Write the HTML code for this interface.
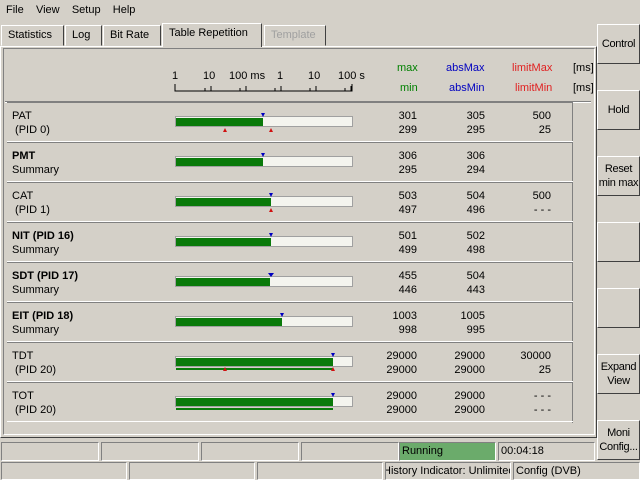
<!DOCTYPE html><html><head><style>
*{box-sizing:border-box}body{margin:0;width:640px;height:480px;background:#d4d0c8;font-family:"Liberation Sans",sans-serif;font-size:11px;position:relative;overflow:hidden;color:#000;white-space:nowrap}
.a{position:absolute}
.tab{position:absolute;top:25px;height:21px;border:1px solid;border-color:#fff #404040 #d4d0c8 #fff;padding:3px 6px;}
.btn{position:absolute;left:597px;width:43px;height:40px;border:1px solid;border-color:#fff #404040 #404040 #fff;text-align:center;font-size:11px;line-height:14px;display:flex;align-items:center;justify-content:center;letter-spacing:-0.3px}
.row{position:absolute;left:7px;width:566px;height:40px;border-bottom:1px solid #fff;border-top:1px solid #808080}
.nm{position:absolute;left:5px;top:6px;line-height:14px}
.bar{position:absolute;left:168px;top:13px;width:178px;height:11px;background:#f4f4ee;border:1px solid #a0a0a0}
.g{position:absolute;left:0;top:1px;height:8px;background:#0a7a0a}
.n{position:absolute;width:60px;text-align:right;top:6px;line-height:14px}
.tri{position:absolute;width:0;height:0;border-left:2px solid transparent;border-right:2px solid transparent}
.b{border-top:4px solid #0000c0}.rd{border-bottom:4px solid #d01010}
.sb{position:absolute;border:1px solid;border-color:#808080 #fff #fff #808080;height:19px;padding:2px 2px;overflow:hidden}
</style></head><body>
<div class="a" style="left:6px;top:4px">File&nbsp;&nbsp;&nbsp; View&nbsp;&nbsp;&nbsp; Setup&nbsp;&nbsp;&nbsp; Help</div>
<div class="a" style="left:0;top:46px;width:597px;height:392px;border:1px solid;border-color:#fff #404040 #404040 #fff"></div>
<div class="a" style="left:3px;top:48px;width:592px;height:387px;border:1px solid;border-color:#808080 #fff #fff #808080"></div>
<div class="tab" style="left:1px;width:63px">Statistics</div>
<div class="tab" style="left:65px;width:37px">Log</div>
<div class="tab" style="left:103px;width:58px">Bit Rate</div>
<div class="tab" style="left:162px;top:23px;height:24px;width:100px;border-bottom:none;background:#d4d0c8">Table Repetition</div>
<div class="tab" style="left:264px;width:62px;color:#a0a0a0">Template</div>
<div class="a" style="left:172px;top:70px">1</div>
<div class="a" style="left:203px;top:70px">10</div>
<div class="a" style="left:229px;top:70px">100 ms</div>
<div class="a" style="left:277px;top:70px">1</div>
<div class="a" style="left:308px;top:70px">10</div>
<div class="a" style="left:338px;top:70px">100 s</div>
<svg class="a" style="left:174px;top:84px" width="180" height="8"><path d="M1 0V7H178V0M31 4V7M37 2V7M66 4V7M72 2V7M101 4V7M107 2V7M136 4V7M142 2V7M171 4V7M177 2V7" stroke="#000" fill="none"/></svg>
<div class="a" style="left:397px;top:62px;color:#008000">max</div><div class="a" style="left:400px;top:82px;color:#008000">min</div>
<div class="a" style="left:446px;top:62px;color:#0000c0">absMax</div><div class="a" style="left:449px;top:82px;color:#0000c0">absMin</div>
<div class="a" style="left:512px;top:62px;color:#e02020">limitMax</div><div class="a" style="left:515px;top:82px;color:#e02020">limitMin</div>
<div class="a" style="left:573px;top:62px">[ms]</div><div class="a" style="left:573px;top:82px">[ms]</div>
<div class="a" style="left:5px;top:101px;width:586px;height:2px;border-top:1px solid #808080;border-bottom:1px solid #fff"></div>
<div class="a" style="left:572px;top:103px;width:1px;height:320px;background:#808080"></div>
<div class="row" style="top:102px"><div class="nm">PAT<br>&nbsp;(PID 0)</div><div class="bar"><div class="g" style="width:87px"></div></div><div class="tri b" style="left:254px;top:10px"></div><div class="tri rd" style="left:216px;top:25px"></div><div class="tri rd" style="left:262px;top:25px"></div><div class="n" style="left:350px">301<br>299</div><div class="n" style="left:418px">305<br>295</div><div class="n" style="left:484px">500<br>25</div></div>
<div class="row" style="top:142px"><div class="nm"><b>PMT</b><br>Summary</div><div class="bar"><div class="g" style="width:87px"></div></div><div class="tri b" style="left:254px;top:10px"></div><div class="n" style="left:350px">306<br>295</div><div class="n" style="left:418px">306<br>294</div></div>
<div class="row" style="top:182px"><div class="nm">CAT<br>&nbsp;(PID 1)</div><div class="bar"><div class="g" style="width:95px"></div></div><div class="tri b" style="left:262px;top:10px"></div><div class="tri rd" style="left:262px;top:25px"></div><div class="n" style="left:350px">503<br>497</div><div class="n" style="left:418px">504<br>496</div><div class="n" style="left:484px">500<br>- - -</div></div>
<div class="row" style="top:222px"><div class="nm"><b>NIT (PID 16)</b><br>Summary</div><div class="bar"><div class="g" style="width:95px"></div></div><div class="tri b" style="left:262px;top:10px"></div><div class="n" style="left:350px">501<br>499</div><div class="n" style="left:418px">502<br>498</div></div>
<div class="row" style="top:262px"><div class="nm"><b>SDT (PID 17)</b><br>Summary</div><div class="bar"><div class="g" style="width:94px"></div></div><div class="tri b" style="left:261px;top:10px;border-left-width:3px;border-right-width:3px"></div><div class="n" style="left:350px">455<br>446</div><div class="n" style="left:418px">504<br>443</div></div>
<div class="row" style="top:302px"><div class="nm"><b>EIT (PID 18)</b><br>Summary</div><div class="bar"><div class="g" style="width:106px"></div></div><div class="tri b" style="left:273px;top:10px"></div><div class="n" style="left:350px">1003<br>998</div><div class="n" style="left:418px">1005<br>995</div></div>
<div class="row" style="top:342px"><div class="nm">TDT<br>&nbsp;(PID 20)</div><div class="bar"><div class="g" style="width:157px"></div></div><div class="a" style="left:169px;top:25px;width:157px;height:2px;background:#0a7a0a"></div><div class="tri b" style="left:324px;top:10px"></div><div class="tri rd" style="left:216px;top:24px"></div><div class="tri rd" style="left:324px;top:24px"></div><div class="n" style="left:350px">29000<br>29000</div><div class="n" style="left:418px">29000<br>29000</div><div class="n" style="left:484px">30000<br>25</div></div>
<div class="row" style="top:382px"><div class="nm">TOT<br>&nbsp;(PID 20)</div><div class="bar"><div class="g" style="width:157px"></div></div><div class="a" style="left:169px;top:25px;width:157px;height:2px;background:#0a7a0a"></div><div class="tri b" style="left:324px;top:10px"></div><div class="n" style="left:350px">29000<br>29000</div><div class="n" style="left:418px">29000<br>29000</div><div class="n" style="left:484px">- - -<br>- - -</div></div>
<div class="btn" style="top:24px">Control</div>
<div class="btn" style="top:90px">Hold</div>
<div class="btn" style="top:156px">Reset<br>min max</div>
<div class="btn" style="top:222px"></div>
<div class="btn" style="top:288px"></div>
<div class="btn" style="top:354px">Expand<br>View</div>
<div class="btn" style="top:420px">Moni<br>Config...</div>
<div class="sb" style="left:1px;top:442px;width:98px"></div>
<div class="sb" style="left:101px;top:442px;width:98px"></div>
<div class="sb" style="left:201px;top:442px;width:98px"></div>
<div class="sb" style="left:301px;top:442px;width:98px"></div>
<div class="sb" style="left:399px;top:442px;width:97px;background:#6bab6b">Running</div>
<div class="sb" style="left:498px;top:442px;width:97px">00:04:18</div>
<div class="sb" style="left:1px;top:462px;width:126px;height:18px"></div>
<div class="sb" style="left:129px;top:462px;width:126px;height:18px"></div>
<div class="sb" style="left:257px;top:462px;width:126px;height:18px"></div>
<div class="sb" style="left:385px;top:462px;width:126px;height:18px;padding:2px 0 0 0"><span style="margin-left:-3px">History Indicator: Unlimited</span></div>
<div class="sb" style="left:513px;top:462px;width:127px;height:18px">Config (DVB)</div>
</body></html>
